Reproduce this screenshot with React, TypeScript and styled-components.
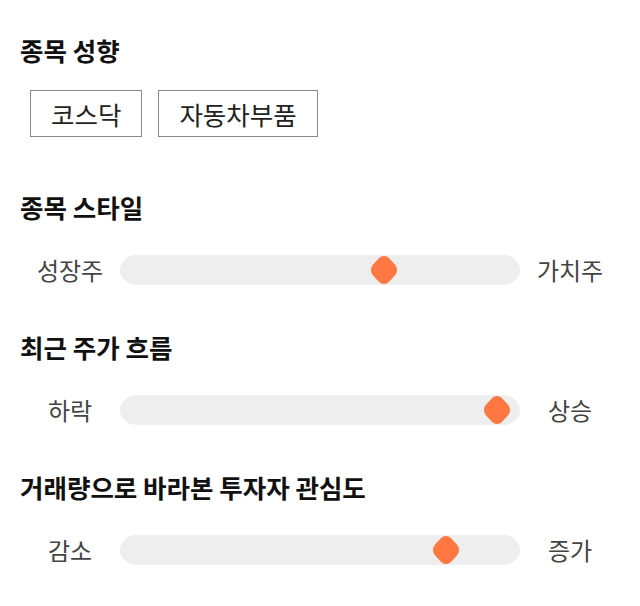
import styled, { createGlobalStyle } from 'styled-components';

const GlobalStyle = createGlobalStyle`
  body {
    margin: 0;
    background: #fff;
    font-family: 'Noto Sans CJK KR', 'Noto Sans', sans-serif;
  }
`;

const Page = styled.div`
  width: 600px;
  padding: 35px 20px 20px;
  display: flex;
  flex-direction: column;
`;

const Section = styled.section<{ $gap: number }>`
  display: flex;
  flex-direction: column;
  gap: ${(p) => p.$gap}px;
  margin-bottom: 47px;
`;

const Title = styled.h2`
  margin: 0;
  height: 30px;
  line-height: 30px;
  font-size: 25.5px;
  font-weight: 700;
  color: #111;
  white-space: nowrap;
`;

const TagRow = styled.div`
  display: flex;
  gap: 16px;
  padding-left: 10px;
  margin-bottom: 8px;
`;

const Tag = styled.span`
  display: inline-flex;
  align-items: center;
  justify-content: center;
  height: 47px;
  box-sizing: border-box;
  padding: 0 20px;
  border: 1px solid #888;
  font-size: 25.5px;
  color: #222;
`;

const SliderRow = styled.div`
  display: grid;
  grid-template-columns: 100px 400px 100px;
  align-items: center;
  height: 30px;
`;

const Label = styled.span`
  text-align: center;
  font-size: 24px;
  line-height: 30px;
  color: #444;
  white-space: nowrap;
`;

const Track = styled.div`
  position: relative;
  height: 30px;
  background: #eeeeee;
  border-radius: 17px / 15px;
`;

const Thumb = styled.div`
  position: absolute;
  top: 50%;
  width: 22px;
  height: 22px;
  margin-left: -11px;
  margin-top: -11px;
  background: #ff7741;
  border-radius: 7px;
  transform: scale(1.03, 1.1) rotate(45deg);
`;

const sliders = [
  { title: '종목 스타일', left: '성장주', right: '가치주', value: 0.66 },
  { title: '최근 주가 흐름', left: '하락', right: '상승', value: 0.943 },
  { title: '거래량으로 바라본 투자자 관심도', left: '감소', right: '증가', value: 0.815 },
];

export default function App() {
  return (
    <>
      <GlobalStyle />
      <Page>
        <Section $gap={25}>
          <Title>종목 성향</Title>
          <TagRow>
            <Tag>코스닥</Tag>
            <Tag>자동차부품</Tag>
          </TagRow>
        </Section>
        {sliders.map((s) => (
          <Section key={s.title} $gap={33}>
            <Title>{s.title}</Title>
            <SliderRow>
              <Label>{s.left}</Label>
              <Track>
                <Thumb style={{ left: `${s.value * 100}%` }} />
              </Track>
              <Label>{s.right}</Label>
            </SliderRow>
          </Section>
        ))}
      </Page>
    </>
  );
}
